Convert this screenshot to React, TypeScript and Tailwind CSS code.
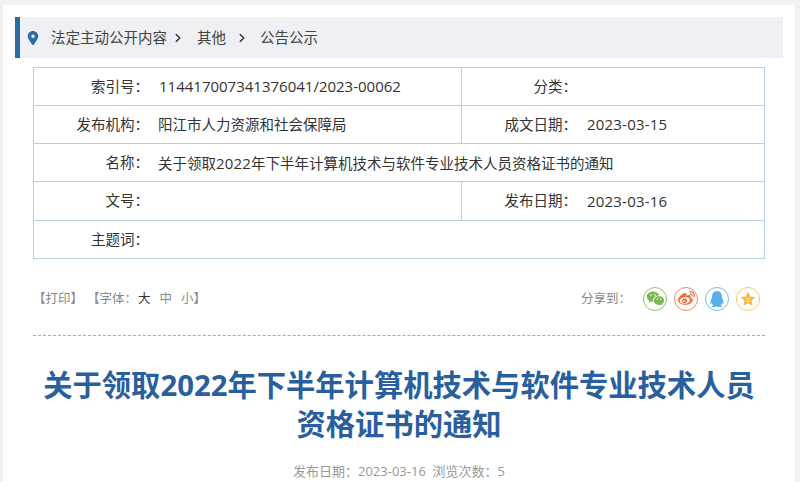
import React from 'react';
import { FaWeibo, FaQq } from 'react-icons/fa';
import { RiWechatFill } from 'react-icons/ri';
import { FaLocationDot } from 'react-icons/fa6';
import { LuChevronRight } from 'react-icons/lu';

const font = "font-['Open_Sans','Noto_Sans_CJK_SC',sans-serif]";

const Label: React.FC<{ text: string }> = ({ text }) => (
  <div className="flex justify-end shrink-0 w-[125px] pr-[10px]">{text}</div>
);

const Num: React.FC<{ children: React.ReactNode }> = ({ children }) => (
  <span className="text-[15px] tracking-[0.2px]">{children}</span>
);

const App: React.FC = () => {
  return (
    <div className={`${font} w-[800px] h-[482px] overflow-hidden bg-[#f1f1f1] pl-[3px] pr-[5px] pt-[5px]`}>
      <div className="bg-white h-full px-3 pt-3">
        {/* Breadcrumb */}
        <div className="h-[41px] bg-[#eef0f3] border-l-[5px] border-[#2b6ca3] flex items-center pl-[7px] text-[14.5px] text-[#444]">
          <FaLocationDot className="text-[#2b6ca3] text-[14px] w-[12px] mr-[12px]" />
          <span>法定主动公开内容</span>
          <LuChevronRight className="text-[#333] ml-[4px] mr-[12px]" size={14} strokeWidth={2.5} />
          <span>其他</span>
          <LuChevronRight className="text-[#333] ml-[9px] mr-[11px]" size={14} strokeWidth={2.5} />
          <span>公告公示</span>
        </div>

        {/* Info table */}
        <div className="ml-[18px] mt-[9px] w-[732px] border border-[#b5cfe6] text-[14.5px] text-[#333]">
          <div className="flex h-[38px] items-center border-b border-[#b5cfe6]">
            <Label text="索引号：" />
            <div className="w-[303px] shrink-0 h-full flex items-center border-r border-[#b5cfe6] text-[15px]">
              114417007341376041/2023-00062
            </div>
            <Label text="分类：" />
          </div>
          <div className="flex h-[38px] items-center border-b border-[#b5cfe6]">
            <Label text="发布机构：" />
            <div className="w-[303px] shrink-0 h-full flex items-center border-r border-[#b5cfe6]">
              <span className="-ml-px">阳江市人力资源和社会保障局</span>
            </div>
            <Label text="成文日期：" />
            <Num>2023-03-15</Num>
          </div>
          <div className="flex h-[38px] items-center border-b border-[#b5cfe6]">
            <Label text="名称：" />
            <div className="-ml-px pt-px">关于领取<Num>2022</Num>年下半年计算机技术与软件专业技术人员资格证书的通知</div>
          </div>
          <div className="flex h-[39px] items-center border-b border-[#b5cfe6]">
            <Label text="文号：" />
            <div className="w-[303px] shrink-0 h-full border-r border-[#b5cfe6]" />
            <Label text="发布日期：" />
            <Num>2023-03-16</Num>
          </div>
          <div className="flex h-[37px] items-center">
            <Label text="主题词：" />
          </div>
        </div>

        {/* Tools row */}
        <div className="ml-[18px] w-[732px] h-[77px] border-b border-dashed border-[#aaa] flex items-center justify-between text-[12.5px] text-[#888] pt-[3px]">
          <div className="flex pt-px">
            <span>【打印】</span>
            <span className="ml-[4px]">【字体：</span>
            <span className="ml-px text-[#333]">大</span>
            <span className="ml-[9px]">中</span>
            <span className="ml-[9px]">小】</span>
          </div>
          <div className="flex items-center">
            <span className="mr-[12px] pt-px">分享到：</span>
            <div className="flex gap-[7px] mr-[5px]">
              <div className="w-6 h-6 rounded-full border border-[#8cc663] flex items-center justify-center">
                <RiWechatFill className="text-[#7ab951]" size={19} />
              </div>
              <div className="w-6 h-6 rounded-full border border-[#f58b62] flex items-center justify-center">
                <FaWeibo className="text-[#f0703f]" size={17} />
              </div>
              <div className="w-6 h-6 rounded-full border border-[#6dbdec] flex items-center justify-center">
                <FaQq className="text-[#56b0e8]" size={16} />
              </div>
              <div className="w-6 h-6 rounded-full border border-[#fbc766] flex items-center justify-center">
                <svg width="16" height="16" viewBox="0 0 16 16">
                  <path d="M8 .8l2.2 4.7 5.1.6-3.8 3.5 1 5.1L8 12.2l-4.5 2.5 1-5.1L.7 6.1l5.1-.6z" fill="#f9b63d" />
                  <path d="M5.8 7.2h4.4L6.2 10.4h4" fill="none" stroke="#fde3ae" strokeWidth="1" />
                </svg>
              </div>
            </div>
          </div>
        </div>

        {/* Title */}
        <h1 className="mt-[30px] w-[768px] text-center text-[29.3px] leading-[38.5px] font-bold text-[#2a5f9e]">
          关于领取2022年下半年计算机技术与软件专业技术人员
          <br />
          资格证书的通知
        </h1>
        <div className="mt-[19px] w-[768px] text-center text-[13px] text-[#999]">
          发布日期：2023-03-16&nbsp;&nbsp;浏览次数：5
        </div>
      </div>
    </div>
  );
};

export default App;
